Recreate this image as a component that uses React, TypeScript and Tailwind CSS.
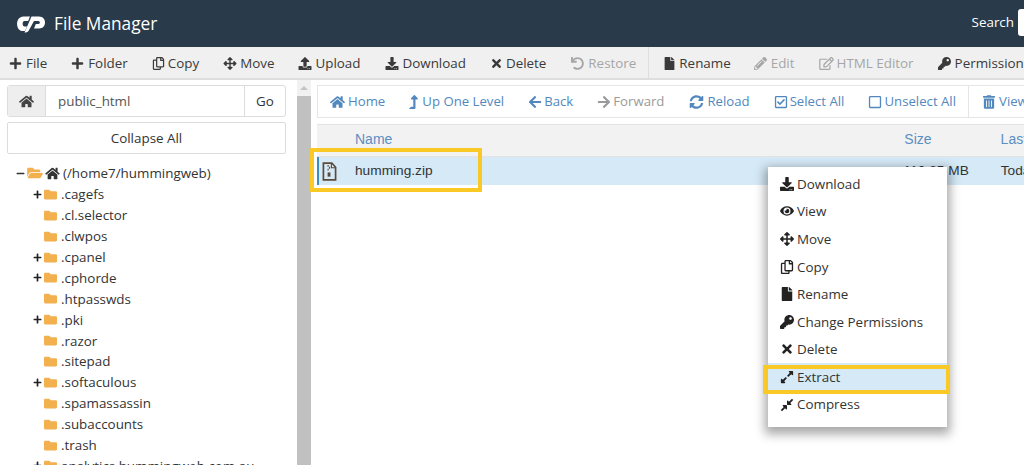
import type { ComponentType, ReactNode } from 'react';
import {
  FaPlus, FaRegCopy, FaArrowsAlt, FaUpload, FaDownload, FaTimes, FaUndo, FaFile, FaPencilAlt,
  FaRegEdit, FaKey, FaHome, FaLevelUpAlt, FaArrowLeft, FaArrowRight, FaSyncAlt, FaRegCheckSquare,
  FaRegSquare, FaTrashAlt, FaFolder, FaFolderOpen, FaMinus, FaEye, FaExpandAlt, FaCompressAlt,
} from 'react-icons/fa';

type Icon = ComponentType<{ className?: string }>;

const toolbar: { icon: Icon; label: string; off?: boolean; iconCls: string; cls: string }[] = [
  { icon: FaPlus, label: 'File', iconCls: 'w-[13px] mr-[4px]', cls: 'mr-[24px]' },
  { icon: FaPlus, label: 'Folder', iconCls: 'w-[13px] mr-[4px]', cls: 'mr-[24px]' },
  { icon: FaRegCopy, label: 'Copy', iconCls: 'w-[13px] mr-[3px]', cls: 'mr-[24px]' },
  { icon: FaArrowsAlt, label: 'Move', iconCls: 'w-[14px] mr-[3px]', cls: 'mr-[24px]' },
  { icon: FaUpload, label: 'Upload', iconCls: 'w-[14px] mr-[3px]', cls: 'mr-[25px]' },
  { icon: FaDownload, label: 'Download', iconCls: 'w-[14px] mr-[3px]', cls: 'mr-[25px]' },
  { icon: FaTimes, label: 'Delete', iconCls: 'w-[11px] mr-[4px]', cls: 'mr-[25px]' },
  { icon: FaUndo, label: 'Restore', off: true, iconCls: 'w-[13px] mr-[4px]', cls: 'mr-[12px]' },
  { icon: FaFile, label: 'Rename', iconCls: 'w-[11px] mr-[4px]', cls: 'border-l border-[#dedede] pl-[15px] mr-[23px]' },
  { icon: FaPencilAlt, label: 'Edit', off: true, iconCls: 'w-[13px] mr-[4px]', cls: 'mr-[24px]' },
  { icon: FaRegEdit, label: 'HTML Editor', off: true, iconCls: 'w-[15px] mr-[3px]', cls: 'mr-[24px]' },
  { icon: FaKey, label: 'Permissions', iconCls: 'w-[13px] mr-[4px]', cls: '' },
];

const nav: { icon: Icon; label: string; off?: boolean; iconCls: string; cls: string }[] = [
  { icon: FaHome, label: 'Home', iconCls: 'w-[15px] mr-[3px]', cls: 'mr-[24px]' },
  { icon: FaLevelUpAlt, label: 'Up One Level', iconCls: 'w-[9px] mr-[4px]', cls: 'mr-[24px]' },
  { icon: FaArrowLeft, label: 'Back', iconCls: 'w-[14px] mr-[2px]', cls: 'mr-[24px]' },
  { icon: FaArrowRight, label: 'Forward', off: true, iconCls: 'w-[14px] mr-[2px]', cls: 'mr-[25px]' },
  { icon: FaSyncAlt, label: 'Reload', iconCls: 'w-[15px] mr-[3px]', cls: 'mr-[24px]' },
  { icon: FaRegCheckSquare, label: 'Select All', iconCls: 'w-[14px] mr-[2px]', cls: 'mr-[24px]' },
  { icon: FaRegSquare, label: 'Unselect All', iconCls: 'w-[14px] mr-[2px]', cls: 'mr-[12px]' },
  { icon: FaTrashAlt, label: 'View Trash', iconCls: 'w-[12px] mr-[4px]', cls: 'border-l border-[#e5e5e5] pl-[14px]' },
];

const tree: [string, boolean][] = [
  ['.cagefs', true],
  ['.cl.selector', false],
  ['.clwpos', false],
  ['.cpanel', true],
  ['.cphorde', true],
  ['.htpasswds', false],
  ['.pki', true],
  ['.razor', false],
  ['.sitepad', false],
  ['.softaculous', true],
  ['.spamassassin', false],
  ['.subaccounts', false],
  ['.trash', false],
  ['analytics.hummingweb.com.au', true],
];

const menu: { icon: Icon; label: string; active?: boolean }[] = [
  { icon: FaDownload, label: 'Download' },
  { icon: FaEye, label: 'View' },
  { icon: FaArrowsAlt, label: 'Move' },
  { icon: FaRegCopy, label: 'Copy' },
  { icon: FaFile, label: 'Rename' },
  { icon: FaKey, label: 'Change Permissions' },
  { icon: FaTimes, label: 'Delete' },
  { icon: FaExpandAlt, label: 'Extract', active: true },
  { icon: FaCompressAlt, label: 'Compress' },
];

function CpLogo() {
  return (
    <svg viewBox="0 0 28 17" className="w-[28px] h-[18px] shrink-0" fill="#fff">
      <path d="M6.500 1H13l-1.800 4.500H7.500c-2.500 0-2.500 5.500.2 5.500h2.300L8 15.500H6C-2 15.500-2 1 6.500 1z" />
      <path d="M14.500 1H22c8 0 8 12 0 12h-5l1.800-4.500h2.700c1.800 0 1.800-3 0-3H17L11.500 15.500C10.700 17 9 17 7.500 17z" />
    </svg>
  );
}

function ZipIcon() {
  return (
    <svg viewBox="0 0 16 20" className="w-[15px] h-[19px]" fill="none" stroke="#5c4a3a" strokeWidth="1.800">
      <path d="M1.500 1h9l4 4.500V19h-13z" />
      <path d="M10 1v5h4.500" strokeWidth="1.200" />
      <path d="M6.500 3v2M8 5v2M6.500 7v2" strokeWidth="1.200" />
      <rect x="6" y="11" width="3" height="4.500" fill="#5c4a3a" stroke="none" />
    </svg>
  );
}

function Highlight({ className }: { className: string }): ReactNode {
  return <div className={`absolute border-[4px] border-[#fbc926] pointer-events-none ${className}`} />;
}

export default function App() {
  return (
    <div className="relative w-[1024px] h-[465px] overflow-hidden bg-white text-[13.400px] text-[#333] font-['Open_Sans',sans-serif]">
      <header className="h-[47px] bg-[#293a4a] flex items-center pl-[17px] text-white whitespace-nowrap">
        <CpLogo />
        <span className="ml-[9px] text-[17.300px] leading-none">File Manager</span>
        <span className="ml-auto -mt-[2px] mr-[4px]">Search</span>
        <div className="w-[6px] h-[27px] -mt-[2px] bg-white rounded-l-[3px] shrink-0" />
      </header>

      <div className="h-[33px] bg-[#f0f0f0] border-b-2 border-[#dedede] flex items-center pl-[9px] whitespace-nowrap">
        {toolbar.map((t) => (
          <div
            key={t.label}
            className={`flex items-center pt-[1px] h-full shrink-0 ${t.off ? 'text-[#a6a6a6]' : 'text-[#3a3a3a]'} ${t.cls}`}
          >
            <t.icon className={`h-[13px] shrink-0 ${t.iconCls}`} />
            <span>{t.label}</span>
          </div>
        ))}
      </div>

      <div className="flex h-[385px]">
        <aside className="w-[297px] shrink-0 pl-[7px] pr-[11px] pt-[5px] overflow-hidden">
          <div className="flex h-[32px] border border-[#dcdcdc] rounded-[3px] bg-white">
            <div className="w-[38px] bg-[#eeeeee] border-r border-[#dcdcdc] flex items-center justify-center text-[#444]">
              <FaHome className="w-[15px] h-[15px]" />
            </div>
            <div className="flex-1 pl-[12px] flex items-center text-[#555]">public_html</div>
            <div className="w-[41px] border-l border-[#dcdcdc] flex items-center justify-center">Go</div>
          </div>
          <div className="mt-[5px] h-[32px] border border-[#dcdcdc] rounded-[2px] flex items-center justify-center">Collapse All</div>
          <div className="mt-[9px] pl-[9px] whitespace-nowrap">
            <div className="flex items-center h-[20.900px]">
              <FaMinus className="w-[9px] h-[9px] text-[#333]" />
              <FaFolderOpen className="ml-[2px] w-[16px] h-[14px] text-[#f2b04f]" />
              <FaHome className="ml-[2px] w-[15px] h-[13px] text-[#333]" />
              <span className="ml-[3px]">(/home7/hummingweb)</span>
            </div>
            {tree.map(([name, plus]) => (
              <div key={name} className="flex items-center h-[20.900px] pl-[17px]">
                <span className="w-[10px] shrink-0">{plus && <FaPlus className="w-[9px] h-[9px] text-[#222]" />}</span>
                <FaFolder className="w-[15px] h-[13px] text-[#f2b04f]" />
                <span className="ml-[3px]">{name}</span>
              </div>
            ))}
          </div>
        </aside>

        <div className="w-[14px] shrink-0 bg-[#f1f1f1] flex flex-col">
          <div className="h-[16px] flex items-center justify-center">
            <div className="w-0 h-0 border-x-[4px] border-x-transparent border-b-[4px] border-b-[#c4c4c4]" />
          </div>
          <div className="flex-1 bg-[#c1c1c1]" />
        </div>

        <main className="flex-1 min-w-0 pl-[6px] pt-[5px]">
          <div className="h-[33px] border-y border-l border-[#e5e5e5] flex items-center pl-[12px] whitespace-nowrap text-[13.200px] text-[#5288be]">
            {nav.map((n) => (
              <div key={n.label} className={`flex items-center h-full shrink-0 ${n.off ? 'text-[#9a9a9a]' : ''} ${n.cls}`}>
                <n.icon className={`h-[14px] shrink-0 ${n.iconCls}`} />
                <span>{n.label}</span>
              </div>
            ))}
          </div>
          <div className="mt-[6px] pb-[2px] h-[33px] bg-[#f2f2f2] border-y border-[#e3e3e3] flex items-center font-['Liberation_Sans',sans-serif] text-[14px] text-[#5b8ec2] whitespace-nowrap">
            <span className="ml-[38px]">Name</span>
            <span className="ml-[512px]">Size</span>
            <span className="ml-[69px]">Last Modified</span>
          </div>
          <div className="h-[28px] bg-[#d5e9f6] border-l-2 border-[#3c8dc5] flex items-center font-['Liberation_Sans',sans-serif] text-[13.700px] text-[#333] whitespace-nowrap">
            <span className="ml-[3px] flex"><ZipIcon /></span>
            <span className="ml-[18px]">humming.zip</span>
            <span className="ml-[471px]">110.85 MB</span>
            <span className="ml-[32px]">Today</span>
          </div>
        </main>
      </div>

      <Highlight className="left-[310px] top-[148px] w-[172px] h-[44px]" />

      <div className="absolute left-[768px] top-[167px] w-[179px] h-[260px] bg-white pt-[3px] shadow-[0_4px_10px_3px_rgba(0,0,0,0.35)]">
        {menu.map((m) => (
          <div
            key={m.label}
            className={`h-[27.600px] flex items-center gap-[3px] pl-[12px] whitespace-nowrap ${m.active ? 'bg-[#d5e9f6]' : ''}`}
          >
            <m.icon className="w-[14px] h-[14px] text-[#222] shrink-0" />
            <span>{m.label}</span>
          </div>
        ))}
      </div>
      <Highlight className="left-[763px] top-[365px] w-[187px] h-[29px]" />
    </div>
  );
}
